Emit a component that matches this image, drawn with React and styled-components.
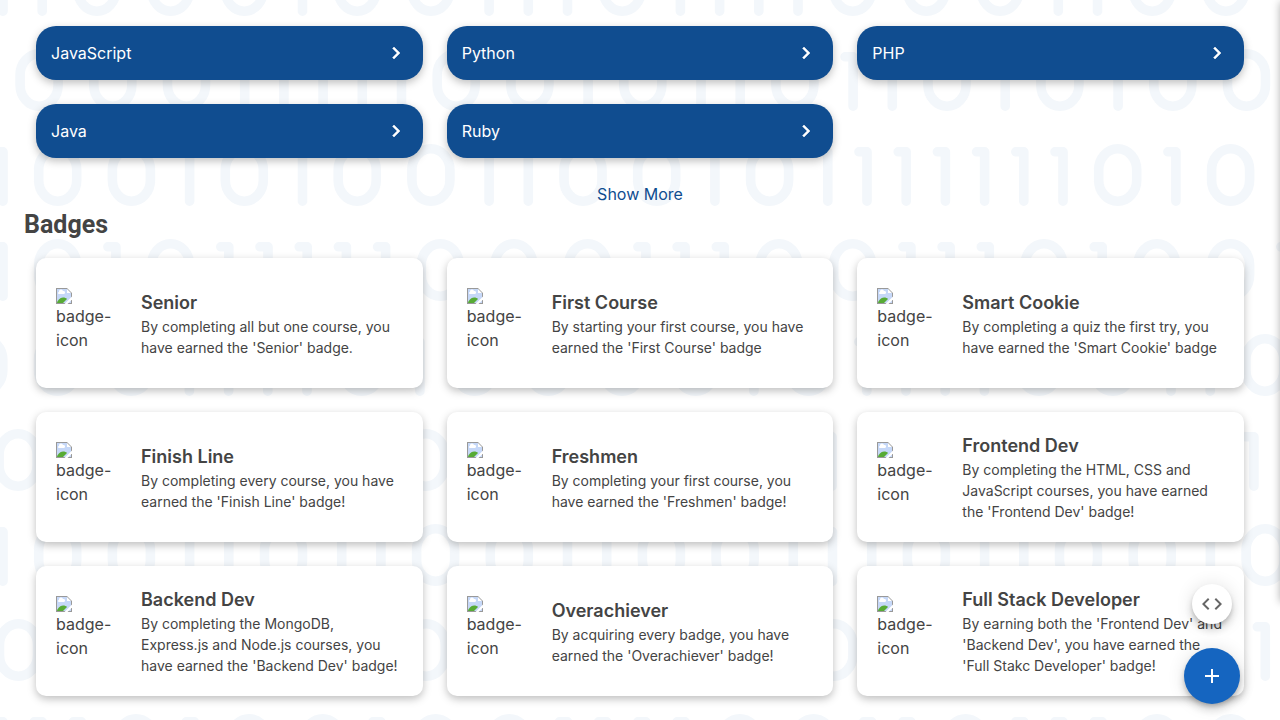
import React from "react";
import styled, { createGlobalStyle } from "styled-components";

const GlobalStyle = createGlobalStyle`
  *, *::before, *::after { box-sizing: border-box; }
  html, body { margin: 0; }
  body {
    background: #fff;
    color: #444;
    font-family: Inter, "Liberation Sans", sans-serif;
    font-size: 16px;
    line-height: 24px;
    overflow: hidden;
    -webkit-font-smoothing: antialiased;
  }
`;

const cardShadow = "0 3px 8px rgba(0,0,0,.26)";
const fabShadow =
  "0 3px 5px -1px rgba(0,0,0,.2), 0 6px 10px 0 rgba(0,0,0,.14), 0 1px 18px 0 rgba(0,0,0,.12)";

const Page = styled.div`
  position: relative;
  height: 100vh;
  overflow: hidden;
`;

const Backdrop = styled.svg`
  position: absolute;
  top: 0;
  left: 0;
  width: 100%;
  height: 100%;
`;

const Content = styled.main`
  position: relative;
  margin-top: -27px;
  padding: 0 24px;
`;

const Heading = styled.h2`
  margin: 0;
  font-family: Roboto, "Liberation Sans", sans-serif;
  font-size: 25px;
  font-weight: 700;
  line-height: 38px;
`;

const Grid = styled.div`
  display: grid;
  grid-template-columns: repeat(3, minmax(0, 1fr));
  gap: 24px;
  padding: 14px 12px 24px;
`;

const CourseGrid = styled(Grid)`
  padding-top: 15px;
`;

const CourseButton = styled.button`
  display: flex;
  align-items: center;
  justify-content: space-between;
  height: 54px;
  padding: 0 15px;
  border: 0;
  border-radius: 20px;
  background: #104d90;
  color: #fff;
  font: inherit;
  box-shadow: ${cardShadow};
  cursor: pointer;
`;

const Icon = styled.svg`
  width: 24px;
  height: 24px;
  fill: currentColor;
  flex: none;
`;

const CourseArrow = styled(Icon)`
  stroke: currentColor;
  stroke-width: 0.5;
`;

const ShowMore = styled.button`
  display: block;
  margin: 0 auto;
  padding: 0;
  border: 0;
  background: none;
  color: #104d90;
  font: inherit;
  cursor: pointer;
`;

const BadgeCard = styled.article`
  display: flex;
  align-items: center;
  gap: 15px;
  height: 130px;
  padding: 0 20px;
  border-radius: 10px;
  background: #fff;
  box-shadow: ${cardShadow};
`;

const BadgePicture = styled.div`
  display: flex;
  flex-direction: column;
  flex: none;
  width: 70px;
  height: 70px;
`;

const BrokenImage = styled.svg`
  width: 16px;
  height: 16px;
  flex: none;
`;

const BadgeTitle = styled.h3`
  margin: 0;
  font-size: 18px;
  font-weight: 600;
  line-height: 27px;
`;

const BadgeText = styled.p`
  margin: 0;
  font-size: 14px;
  line-height: 21px;
`;

const FabStack = styled.div`
  position: fixed;
  right: 40px;
  bottom: 16px;
  display: flex;
  flex-direction: column;
  align-items: center;
  gap: 24px;
`;

const Fab = styled.button`
  display: flex;
  align-items: center;
  justify-content: center;
  width: ${(p) => (p.$small ? 40 : 56)}px;
  height: ${(p) => (p.$small ? 40 : 56)}px;
  padding: 0;
  border: 0;
  border-radius: 50%;
  background: ${(p) => (p.$small ? "#fff" : "#1565c0")};
  color: ${(p) => (p.$small ? "#666" : "#fff")};
  box-shadow: ${fabShadow};
  cursor: pointer;
`;

const Drawer = styled.aside`
  position: fixed;
  top: 0;
  left: 100%;
  width: 300px;
  height: 600px;
  background: #fff;
  box-shadow: 0 2px 8px rgba(0,0,0,.3);
`;

const courses = ["JavaScript", "Python", "PHP", "Java", "Ruby"];

const badges = [
  ["Senior", "By completing all but one course, you have earned the 'Senior' badge."],
  ["First Course", "By starting your first course, you have earned the 'First Course' badge"],
  ["Smart Cookie", "By completing a quiz the first try, you have earned the 'Smart Cookie' badge"],
  ["Finish Line", "By completing every course, you have earned the 'Finish Line' badge!"],
  ["Freshmen", "By completing your first course, you have earned the 'Freshmen' badge!"],
  ["Frontend Dev", "By completing the HTML, CSS and JavaScript courses, you have earned the 'Frontend Dev' badge!"],
  ["Backend Dev", "By completing the MongoDB, Express.js and Node.js courses, you have earned the 'Backend Dev' badge!"],
  ["Overachiever", "By acquiring every badge, you have earned the 'Overachiever' badge!"],
  ["Full Stack Developer", "By earning both the 'Frontend Dev' and 'Backend Dev', you have earned the 'Full Stakc Developer' badge!"],
];

// Each pattern row: where its first cell starts, then its rings (0) and bars (1).
// Spaces only group the cells for reading.
const patternRows = [
  [-5.3, "11 000 1 00 111 0 1111 000 11 00"],
  [15.3, "000 11111 00 1 0 11 0 11 0 1 0 1 00"],
  [-5.3, "1 00 1 0 1 00 11 00 1 0 1111111 0 1 0"],
  [-5.3, "1 0 1 0 11111 000 111 00 111 0 1 00 1"],
  [-40, "000 1111 0 1 0000 1 0 1111 00 11 0"],
  [-5.7, "0 00001 0 01111111 1 11111100 1"],
  [-5.3, "1 00 11 0 11 00 11 00 111 0 11 00 1 0"],
  [-5.3, "0 00001 0 00001 0 000011 1"],
  [-5.3, "111 0 1 00 1 00 1111 00 11 0 111 00"],
];

const ringWidth = 73.7;
const barWidth = 39.2;

function BinaryPattern() {
  const shapes = [];
  patternRows.forEach(([start, cells], row) => {
    const top = 95 * row - 46;
    let x = start;
    [...cells.replaceAll(" ", "")].forEach((cell, i) => {
      const key = `${row}-${i}`;
      if (cell === "0") {
        shapes.push(
          <rect key={key} x={x + 4.8} y={top + 4.8} width="38" height="52.4" rx="19" ry="21" />
        );
        x += ringWidth;
      } else {
        shapes.push(<path key={key} d={`M${x + 0.3} ${top + 7.8}h8v49.4`} />);
        x += barWidth;
      }
    });
  });
  return (
    <Backdrop aria-hidden="true">
      <g fill="none" stroke="#f3f7fb" strokeWidth="9.6" strokeLinecap="round" strokeLinejoin="round">
        {shapes}
      </g>
    </Backdrop>
  );
}

function BrokenImageIcon() {
  return (
    <BrokenImage viewBox="0 0 16 16" aria-hidden="true">
      <path d="M0 0h11l5 5v11H0z" fill="#999" />
      <path d="M1 1h10v4h4v10H1z" fill="#c6d8f8" />
      <path d="M3 6a1 1 0 0 1 0-2 2 2 0 0 1 4-1 1.500 1.500 0 0 1 1 3z" fill="#fff" />
      <path d="M1 15c0-2 3-5.500 6-5.500 2 0 3 .5 4 1.500l-4 4z" fill="#57ab35" />
      <path d="M11 1v4h4z" fill="#fff" />
      <path d="M8.500 16h3L16 11.500V8.500z" fill="#fff" />
    </BrokenImage>
  );
}

export default function App() {
  return (
    <Page>
      <GlobalStyle />
      <BinaryPattern />
      <Content>
        <Heading>Course List</Heading>
        <CourseGrid>
          {courses.map((name) => (
            <CourseButton key={name} type="button">
              {name}
              <CourseArrow viewBox="0 0 24 24" aria-hidden="true">
                <path d="M10 6 8.590 7.410 13.170 12l-4.580 4.590L10 18l6-6z" />
              </CourseArrow>
            </CourseButton>
          ))}
        </CourseGrid>
        <ShowMore type="button">Show More</ShowMore>
        <Heading>Badges</Heading>
        <Grid>
          {badges.map(([title, text]) => (
            <BadgeCard key={title}>
              <BadgePicture>
                <BrokenImageIcon />
                <span>badge-icon</span>
              </BadgePicture>
              <div>
                <BadgeTitle>{title}</BadgeTitle>
                <BadgeText>{text}</BadgeText>
              </div>
            </BadgeCard>
          ))}
        </Grid>
      </Content>
      <Drawer />
      <FabStack>
        <Fab $small type="button" aria-label="View code">
          <Icon viewBox="0 0 24 24" aria-hidden="true">
            <path d="M9.400 16.600 4.800 12l4.600-4.600L8 6l-6 6 6 6 1.400-1.400zm5.200 0 4.600-4.600-4.600-4.600L16 6l6 6-6 6-1.400-1.400z" />
          </Icon>
        </Fab>
        <Fab type="button" aria-label="Add">
          <Icon viewBox="0 0 24 24" aria-hidden="true">
            <path d="M19 13h-6v6h-2v-6H5v-2h6V5h2v6h6v2z" />
          </Icon>
        </Fab>
      </FabStack>
    </Page>
  );
}
